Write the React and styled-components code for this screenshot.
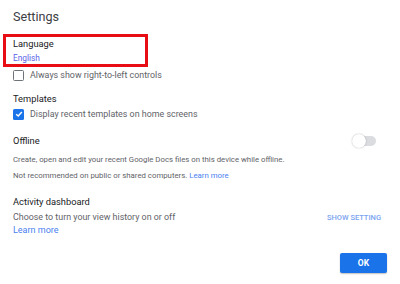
import React from 'react'
import styled, { createGlobalStyle } from 'styled-components'

const Global = createGlobalStyle`
  html, body {
    margin: 0;
    padding: 0;
    background: #fff;
  }
  body {
    font-family: Roboto, "Liberation Sans", sans-serif;
    color: #3c4043;
  }
`

function Checkbox({ checked }) {
  return (
    <Box checked={checked}>
      {checked && (
        <svg width="8" height="8" viewBox="0 0 10 10">
          <path d="M1.5 5.2 L4 7.6 L8.6 2.4" fill="none" stroke="#fff" strokeWidth="1.8" />
        </svg>
      )}
    </Box>
  )
}

export default function App() {
  return (
    <Dialog>
      <Global />
      <Title>Settings</Title>

      <Highlight>
        <Heading>Language</Heading>
        <LinkText small>English</LinkText>
      </Highlight>
      <CheckRow top={1}>
        <Checkbox />
        <Label>Always show right-to-left controls</Label>
      </CheckRow>

      <Heading top={10}>Templates</Heading>
      <CheckRow top={2}>
        <Checkbox checked />
        <Label>Display recent templates on home screens</Label>
      </CheckRow>

      <SpreadRow top={13}>
        <Heading>Offline</Heading>
        <Toggle>
          <Knob />
        </Toggle>
      </SpreadRow>
      <Note top={7}>Create, open and edit your recent Google Docs files on this device while offline.</Note>
      <Note top={4}>
        Not recommended on public or shared computers. <LinkText tiny>Learn more</LinkText>
      </Note>

      <Heading top={13}>Activity dashboard</Heading>
      <SpreadRow top={3}>
        <Description>Choose to turn your view history on or off</Description>
        <TextButton>SHOW SETTING</TextButton>
      </SpreadRow>
      <LinkText>Learn more</LinkText>

      <Footer>
        <OkButton>OK</OkButton>
      </Footer>
    </Dialog>
  )
}

const Dialog = styled.div`
  width: 400px;
  height: 284px;
  box-sizing: border-box;
  padding: 8px 13px 0 13px;
  display: flex;
  flex-direction: column;
  align-items: stretch;
`

const Title = styled.div`
  font-size: 12.6px;
  line-height: 18px;
  color: #3c4043;
`

const Highlight = styled.div`
  margin: 8px 0 0 -10px;
  width: 145px;
  height: 33px;
  box-sizing: border-box;
  border: 3px solid #e80c14;
  padding: 0 0 0 7px;
  display: flex;
  flex-direction: column;

  span {
    margin-top: 2px;
  }
`

const Heading = styled.div`
  font-size: 9.3px;
  line-height: 13px;
  color: #202124;
  margin-top: ${p => p.top || 0}px;
`

const LinkText = styled.span`
  font-size: ${p => (p.small ? 8.3 : p.tiny ? 7.8 : 9)}px;
  line-height: 13px;
  color: ${p => (p.small ? '#5b63e8' : '#4a7ff0')};
`

const CheckRow = styled.div`
  display: flex;
  align-items: center;
  gap: 6px;
  height: 14px;
  margin-top: ${p => p.top || 0}px;
`

const Box = styled.div`
  width: 11px;
  height: 11px;
  box-sizing: border-box;
  border-radius: 1.5px;
  border: ${p => (p.checked ? 'none' : '1.2px solid #6f7377')};
  background: ${p => (p.checked ? '#1a73e8' : '#fff')};
  display: flex;
  align-items: center;
  justify-content: center;
`

const Label = styled.span`
  font-size: 8.9px;
  color: #5f6368;
`

const SpreadRow = styled.div`
  display: flex;
  align-items: center;
  justify-content: space-between;
  height: 13px;
  margin-top: ${p => p.top || 0}px;
`

const Toggle = styled.div`
  position: relative;
  width: 23px;
  height: 10px;
  border-radius: 5px;
  background: #dadce0;
  margin-right: 11px;
`

const Knob = styled.div`
  position: absolute;
  left: -1px;
  top: -2px;
  width: 14px;
  height: 14px;
  box-sizing: border-box;
  border-radius: 50%;
  background: #fff;
  box-shadow: 0 0 1.5px rgba(0, 0, 0, 0.35);
`

const Note = styled.div`
  font-size: 7.8px;
  line-height: 11px;
  color: #5f6368;
  margin-top: ${p => p.top || 0}px;
`

const Description = styled.span`
  font-size: 8.9px;
  line-height: 13px;
  color: #5f6368;
`

const TextButton = styled.span`
  font-size: 7.5px;
  font-weight: 500;
  color: #7aa3f0;
  margin-right: 6px;
`

const Footer = styled.div`
  display: flex;
  justify-content: flex-end;
  margin-top: auto;
  padding-bottom: 11px;
`

const OkButton = styled.button`
  width: 47px;
  height: 20px;
  border: none;
  border-radius: 2px;
  background: #1a73e8;
  color: #fff;
  font-family: Roboto, "Liberation Sans", sans-serif;
  font-weight: 700;
  font-size: 8.5px;
  box-shadow: 0 1px 1.5px rgba(0, 0, 0, 0.25);
`
